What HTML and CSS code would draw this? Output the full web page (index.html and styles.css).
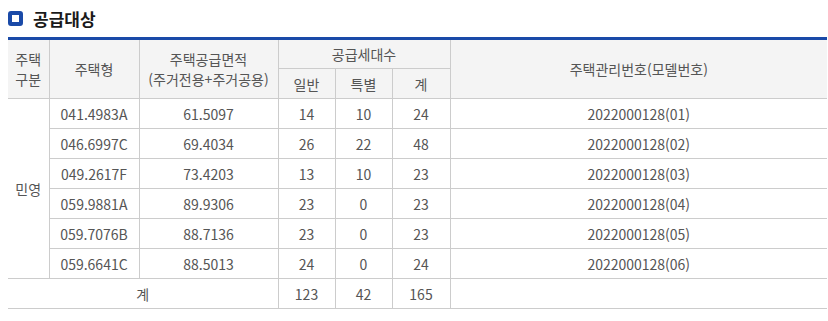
FILE: index.html
```html
<!DOCTYPE html>
<html lang="ko">
<head>
<meta charset="utf-8">
<link rel="stylesheet" href="styles.css">
</head>
<body>
<div class="wrap">
  <h3 class="title"><span class="ico"></span>공급대상</h3>
  <table class="tbl">
    <colgroup>
      <col class="c1"><col class="c2"><col class="c3"><col class="c4"><col class="c5"><col class="c6"><col>
    </colgroup>
    <thead>
      <tr>
        <th rowspan="2" class="noleft">주택<br>구분</th>
        <th rowspan="2">주택형</th>
        <th rowspan="2">주택공급면적<br>(주거전용+주거공용)</th>
        <th colspan="3">공급세대수</th>
        <th rowspan="2">주택관리번호(모델번호)</th>
      </tr>
      <tr class="sub">
        <th>일반</th><th>특별</th><th>계</th>
      </tr>
    </thead>
    <tbody>
      <tr><td rowspan="6" class="noleft">민영</td><td>041.4983A</td><td>61.5097</td><td>14</td><td>10</td><td>24</td><td>2022000128(01)</td></tr>
      <tr><td>046.6997C</td><td>69.4034</td><td>26</td><td>22</td><td>48</td><td>2022000128(02)</td></tr>
      <tr><td>049.2617F</td><td>73.4203</td><td>13</td><td>10</td><td>23</td><td>2022000128(03)</td></tr>
      <tr><td>059.9881A</td><td>89.9306</td><td>23</td><td>0</td><td>23</td><td>2022000128(04)</td></tr>
      <tr><td>059.7076B</td><td>88.7136</td><td>23</td><td>0</td><td>23</td><td>2022000128(05)</td></tr>
      <tr><td>059.6641C</td><td>88.5013</td><td>24</td><td>0</td><td>24</td><td>2022000128(06)</td></tr>
      <tr><td colspan="3" class="noleft">계</td><td>123</td><td>42</td><td>165</td><td></td></tr>
    </tbody>
  </table>
</div>
</body>
</html>
```
FILE: styles.css
```css
html, body {
  margin: 0;
  padding: 0;
  background: #fff;
}
body {
  font-family: "Noto Sans CJK KR", "Noto Sans", sans-serif;
  color: #555;
}
.wrap {
  width: 819px;
  padding: 0 0 0 8px;
}
.title {
  display: flex;
  align-items: center;
  gap: 10px;
  margin: 0;
  height: 37px;
  font-size: 17px;
  font-weight: 700;
  color: #1a1a1a;
  box-sizing: border-box;
}
.ico {
  width: 15px;
  height: 15px;
  box-sizing: border-box;
  border: 4px solid #1a4aa8;
  border-radius: 3px;
  background: #fff;
  margin-top: -1px;
}
.tbl {
  width: 819px;
  border-collapse: collapse;
  border-top: 3px solid #1a4aa8;
  table-layout: fixed;
  font-size: 14px;
}
.c1 { width: 41px; }
.c2 { width: 90px; }
.c3 { width: 139px; }
.c4 { width: 57px; }
.c5 { width: 57px; }
.c6 { width: 58px; }
.tbl th, .tbl td {
  border: 1px solid #cccccc;
  text-align: center;
  padding: 0;
  line-height: 20px;
}
.tbl th {
  background: #f4f4f4;
  font-weight: 400;
  color: #555;
  height: 28px;
}
.tbl .sub th {
  height: 29px;
}
.tbl td {
  height: 29px;
  color: #555;
}
.tbl tr > :last-child { border-right: none; }
.tbl .noleft { border-left: none; }
```
